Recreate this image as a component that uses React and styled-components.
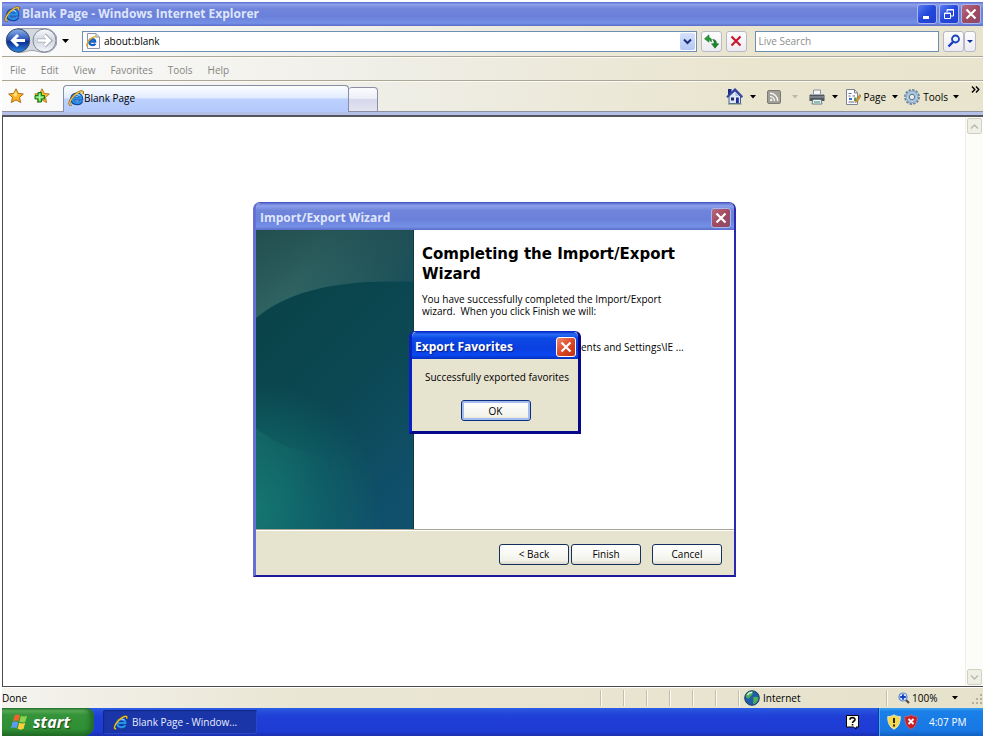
import React from 'react';
import styled, { createGlobalStyle, css } from 'styled-components';

const GlobalStyle = createGlobalStyle`
  *, *::before, *::after { box-sizing: border-box; }
  body {
    margin: 0;
    background: #fff;
    color: #000;
    font: 10px/12px "Open Sans", "Noto Sans", sans-serif;
  }
  button, input, select { font: inherit; color: inherit; margin: 0; }
  button { padding: 0; border: 0; background: none; }
  svg { display: block; flex: none; }
`;

const Desktop = styled.div`
  position: relative;
  display: flex;
  flex-direction: column;
  min-height: 100vh;
  padding: 2px 1px 2px 2px;
`;

/* ---------- title bars ---------- */

const TitleBar = styled.header`
  display: flex;
  align-items: center;
  flex: none;
  height: ${p => p.$h || 24}px;
  padding: ${p => p.$pad || '0 2px 0 2px'};
  color: ${p => (p.$active ? '#fff' : '#dfe6fb')};
  font-weight: bold;
  font-size: 12px;
  line-height: 16px;
  border-radius: ${p => (p.$round ? '5px 5px 0 0' : 0)};
  background: ${p =>
    p.$active
      ? 'linear-gradient(#0831c8 0, #2a6cf4 8%, #0d4be6 22%, #0a3fe0 60%, #0b48f0 85%, #0530c0 100%)'
      : 'linear-gradient(#5b6cd0 0, #8ca0ec 10%, #7085da 28%, #6a80da 60%, #7490e6 88%, #5a6cc8 100%)'};
  ${p => p.$active && css`text-shadow: 1px 1px 1px #041e88;`}
`;

const TitleText = styled.h1`
  flex: 1;
  min-width: 0;
  margin: 0;
  padding-left: ${p => (p.$icon ? 2 : 0)}px;
  overflow: hidden;
  white-space: nowrap;
  font: inherit;
`;

const tones = {
  blue: 'linear-gradient(135deg, #5b7df0, #2447dc 50%, #1f3fd0)',
  dim: 'linear-gradient(135deg, #b86a80, #a04a60 50%, #8c4a6a)',
  red: 'linear-gradient(135deg, #f08a70, #dc4828 50%, #c03010)',
};

const CaptionButton = styled.button`
  display: grid;
  place-items: center;
  width: 20px;
  height: 20px;
  margin-left: 2px;
  border: 1px solid ${p => (p.$tone === 'red' ? '#fff' : '#a9b6ee')};
  border-radius: 3px;
  background: ${p => tones[p.$tone]};
`;

/* ---------- navigation row ---------- */

const rowFill = 'linear-gradient(90deg, #fbfbfc, #efeee6 40%, #e9e5cf 75%, #e8e4cd)';

const NavRow = styled.div`
  display: flex;
  align-items: center;
  flex: none;
  height: 31px;
  padding: 0 7px 0 3px;
  border-bottom: 1px solid #aaa796;
  background: ${rowFill};
`;

const NavPair = styled.div`
  display: flex;
  align-items: center;
  height: 28px;
`;

const DropButton = styled.button`
  display: grid;
  place-items: center;
  width: ${p => p.$w || 14}px;
  height: 16px;
`;

const AddressBox = styled.label`
  display: flex;
  align-items: center;
  flex: 1;
  height: 21px;
  margin: 0 4px 0 8px;
  padding: 0 1px 0 2px;
  border: 1px solid #6d8fb5;
  background: #fff;
`;

const TextInput = styled.input`
  flex: 1;
  min-width: 0;
  height: 17px;
  padding: 0 3px;
  border: 0;
  outline: 0;
  background: transparent;
  &::placeholder { color: #8d8d8d; opacity: 1; }
`;

const SearchBox = styled(AddressBox)`
  flex: 0 0 19%;
  margin: 0 4px 0 8px;
  padding: 0;
`;

const ComboButton = styled.button`
  display: grid;
  place-items: center;
  width: 15px;
  height: 17px;
  border-radius: 2px;
  background: linear-gradient(#d5e0fc, #b4c8f6);
`;

const ToolButton = styled.button`
  display: grid;
  place-items: center;
  width: ${p => p.$w || 21}px;
  height: 21px;
  margin-right: ${p => p.$gap || 0}px;
  border: 1px solid #b7b9c6;
  border-radius: 3px;
  background: linear-gradient(#fdfdfd, #ecebf2);
`;

/* ---------- menu row ---------- */

const MenuRow = styled.nav`
  display: flex;
  align-items: center;
  flex: none;
  gap: 15px;
  height: 24px;
  padding: 1px 8px 0;
  border-top: 1px solid #fbfaf4;
  border-bottom: 1px solid #aaa796;
  color: #858580;
  background: ${rowFill};
`;

/* ---------- tab row ---------- */

const TabRow = styled.div`
  display: flex;
  align-items: flex-end;
  flex: none;
  height: 34px;
  padding: 0 1px 0 5px;
  border-bottom: 3px solid #b4c0e8;
  background: ${rowFill};
  box-shadow: inset 0 -1px #8d929d, inset 0 1px #fbfaf4;
`;

const IconButton = styled.button`
  align-self: center;
  display: grid;
  place-items: center;
  width: 18px;
  height: 18px;
  margin: 0 8px 2px 0;
`;

const Tab = styled.button`
  display: flex;
  align-items: center;
  flex: 0 1 286px;
  height: 27px;
  margin-left: 4px;
  padding: 0 0 2px 4px;
  border: 1px solid #858ea5;
  border-bottom: 0;
  border-radius: 4px 4px 0 0;
  background: linear-gradient(#fdfeff, #e2ecff 45%, #bdd1ff 50%, #b4c9fc);
`;

const NewTab = styled.button`
  width: 29px;
  height: 25px;
  border: 1px solid #8b8fa5;
  border-left: 0;
  border-radius: 3px 4px 0 0;
  background: linear-gradient(#fbfbff, #eeeef8 45%, #d6d8ec 50%, #e4e4f0);
`;

const Commands = styled.div`
  display: flex;
  align-items: center;
  align-self: center;
  margin-left: auto;
`;

const Command = styled.button`
  display: flex;
  align-items: center;
  gap: ${p => p.$space || 2}px;
  height: 18px;
  margin-left: ${p => p.$gap || 0}px;
`;

const More = styled.button`
  align-self: flex-start;
  width: 14px;
  margin: 1px 0 0 4px;
  height: 14px;
  display: grid;
  place-items: center;
`;

/* ---------- document ---------- */

const Viewport = styled.main`
  display: flex;
  flex: 1;
  justify-content: flex-end;
  border: 1px solid #4b4b4b;
  border-width: 2px 0 1px 1px;
  border-top-color: #55565c;
  background: #fff;
`;

const ScrollTrack = styled.div`
  display: flex;
  flex-direction: column;
  justify-content: space-between;
  align-items: center;
  width: 18px;
  padding: 1px;
  border-left: 1px solid #efeee8;
  background: #fcfcf9;
`;

const ScrollButton = styled.button`
  display: grid;
  place-items: center;
  width: 15px;
  height: 16px;
  border: 1px solid #d2d0c2;
  border-radius: 2px;
  background: #f0efe5;
`;

/* ---------- status bar ---------- */

const StatusBar = styled.footer`
  display: flex;
  align-items: center;
  flex: none;
  height: 21px;
  border-top: 1px solid #fff;
  background: linear-gradient(90deg, #f4f3ee, #e9e6d4 30%, #e6e2cb);
`;

const StatusText = styled.span`flex: 1;`;

const StatusCell = styled.span`
  display: flex;
  align-items: center;
  gap: ${p => p.$gap || 0}px;
  width: ${p => p.$w || 23}px;
  height: 16px;
  padding-left: ${p => p.$pad || 0}px;
  border-left: 1px solid #c2bfac;
  box-shadow: inset 1px 0 #faf9f2;
`;

/* ---------- taskbar ---------- */

const Taskbar = styled.div`
  display: flex;
  align-items: stretch;
  flex: none;
  height: 28px;
  color: #fff;
  background: linear-gradient(#2c5ee8 0, #2650dc 10%, #1f3fd6 30%, #1e3bd4 85%, #1a30ac 100%);
`;

const Start = styled.button`
  display: flex;
  align-items: center;
  gap: 4px;
  width: 92px;
  padding: 0 0 1px 9px;
  border-radius: 0 8px 10px 0;
  color: #fff;
  font: italic bold 16px/20px "Open Sans", sans-serif;
  text-shadow: 1px 1px 1px #1d4a1d;
  background: linear-gradient(#2f7a2f 0, #5cb05a 9%, #35933a 24%, #2f8f33 75%, #226b26 100%);
  box-shadow: inset -4px 0 5px #1f6b28;
`;

const TaskButton = styled.button`
  display: flex;
  align-items: center;
  gap: 4px;
  width: 154px;
  height: 24px;
  margin: 2px 0 0 9px;
  padding-left: 10px;
  border-radius: 2px;
  color: #e8eeff;
  background: #1a35a8;
  box-shadow: inset 1px 1px 1px #122880, inset -1px -1px 0 #2a48c4;
`;

const Help = styled.button`
  display: grid;
  place-items: center;
  width: 16px;
  margin: 0 17px 0 auto;
`;

const Tray = styled.div`
  display: flex;
  align-items: center;
  gap: 3px;
  width: 105px;
  padding-left: 8px;
  border-left: 1px solid #123a9c;
  background: linear-gradient(#3aa2f4 0, #1a80e8 12%, #1877e4 80%, #1260c0 100%);
  box-shadow: inset 1px 0 #44b0f8;
`;

const Clock = styled.time`margin-left: 8px;`;

/* ---------- dialogs ---------- */

const Wizard = styled.section`
  position: absolute;
  left: 253px;
  top: 202px;
  width: 483px;
  display: flex;
  flex-direction: column;
  border: 3px solid #5560cc;
  border-color: #4a54c0 #2a2ab0 #1b1a9c #6670d4;
  border-width: 1px 2px 2px 3px;
  border-radius: 7px 7px 0 0;
  background: #e6e3cf;
`;

const WizardBody = styled.div`
  display: flex;
  height: 300px;
  border-bottom: 1px solid #a8a594;
  background: #fff;
`;

const WizardCopy = styled.div`
  flex: 1;
  padding: 14px 8px 0;
`;

const Heading = styled.h2`
  margin: 0 0 9px;
  font: bold 15px/20px "DejaVu Sans", sans-serif;
`;

const Copy = styled.p`
  max-width: 260px;
  margin: 0 0 24px;
  white-space: pre-line;
`;

const PathLine = styled.p`
  margin: 0;
  padding-left: 159px;
  white-space: nowrap;
`;

const WizardButtons = styled.div`
  display: flex;
  justify-content: flex-end;
  align-items: center;
  gap: 2px;
  height: 45px;
  padding: 2px 12px 0 0;
  border-top: 1px solid #fff;
`;

const PushButton = styled.button`
  width: 70px;
  height: 21px;
  margin-left: ${p => p.$gap || 0}px;
  border: 1px solid #14305c;
  border-radius: 3px;
  background: linear-gradient(#fff, #f3f3ec 80%, #dcd8cc);
  ${p => p.$focus && css`
    border-color: #0c2c84;
    box-shadow: inset 0 0 0 2px #a3bdee;
  `}
`;

const Message = styled.section`
  position: absolute;
  left: 409px;
  top: 331px;
  width: 172px;
  border: 3px solid #0a1fc4;
  border-color: #0a2ad0 #06088c #06088c #0a1fc4;
  border-top-width: 1px;
  border-radius: 6px 6px 0 0;
  background: #e6e3cf;
`;

const MessageBody = styled.div`
  display: flex;
  flex-direction: column;
  gap: 17px;
  height: 72px;
  padding-top: 12px;
  padding-left: 13px;
  white-space: nowrap;
`;

const MessageActions = styled.div`
  display: flex;
  justify-content: center;
  padding-right: 12px;
`;

/* ---------- drawings ---------- */

const IeIcon = ({ size = 16 }) => (
  <svg width={size} height={size} viewBox="0 0 16 16" fill="none" aria-hidden="true">
    <path d="M13.600 10.800C11.300 15 4.300 14 4 8.800 4 3 13.600 2.600 13.400 8.600H5.500" stroke="#0b3f94" strokeWidth="3.600" />
    <path d="M13.300 10.600C11.200 14.500 4.500 13.500 4.300 8.800 4.300 3.500 13.200 3 13.200 8.500H5.500" stroke="#2a8fe8" strokeWidth="2.300" />
    <path d="M5.200 6C6.500 4 10.500 3.600 12 5.600" stroke="#9bdcff" strokeWidth="1.200" />
    <path d="M3.500 14.700C.600 15.600.500 11.500 5 6.600 8.600 2.600 13.300.200 14.700 1.600c.600.700.300 1.700-.100 2.500" stroke="#7a6018" strokeWidth="2" />
    <path d="M3.300 14.500C.900 15.100 1 11.400 5.100 6.800 8.700 2.800 13.200.700 14.400 1.800c.500.500.300 1.400 0 2" stroke="#f9c83a" strokeWidth="1.200" />
  </svg>
);

const PageIeIcon = () => (
  <svg width="16" height="16" viewBox="0 0 16 16" fill="none" aria-hidden="true">
    <path d="M2.500.500H11L14.500 4v11.500h-12z" fill="#fdfdfd" stroke="#8c94a8" />
    <path d="M11 .500V4h3.500" stroke="#8c94a8" />
    <path d="M10.300 10.600C8.900 13 4.300 12.500 4.200 9c0-3.600 6-4 6-.300H5" stroke="#1560c4" strokeWidth="2.200" />
    <path d="M2.800 13.300C1 13.500 1.400 10.300 4.500 7 7.500 3.900 11 2.800 11.500 4.200" stroke="#e5aa1d" strokeWidth="1.300" />
  </svg>
);

const Caret = ({ color = '#000' }) => (
  <svg width="6" height="4" viewBox="0 0 6 4" aria-hidden="true"><path d="M0 0h6L3 3.500z" fill={color} /></svg>
);

const Chevron = ({ up, color = '#1c2f78', width = 2 }) => (
  <svg width="9" height="7" viewBox="0 0 9 7" fill="none" aria-hidden="true">
    <path d={up ? 'M1 5.500 4.500 2 8 5.500' : 'M1 1.500 4.500 5 8 1.500'} stroke={color} strokeWidth={width} />
  </svg>
);

const Cross = ({ color = '#fff' }) => (
  <svg width="12" height="12" viewBox="0 0 12 12" aria-hidden="true">
    <path d="M1.500 1.500l9 9M10.500 1.500l-9 9" stroke={color} strokeWidth="2.200" />
  </svg>
);

const NavArrows = () => (
  <svg width="52" height="28" viewBox="0 0 52 28" fill="none" aria-hidden="true">
    <defs>
      <linearGradient id="backFill" x2="0" y2="1">
        <stop stopColor="#8fb2ea" /><stop offset=".45" stopColor="#2d58b8" /><stop offset=".55" stopColor="#0c2e94" /><stop offset="1" stopColor="#2b8ae4" />
      </linearGradient>
      <linearGradient id="forwardFill" x2="0" y2="1">
        <stop stopColor="#fafbfd" /><stop offset=".5" stopColor="#cfd6e0" /><stop offset="1" stopColor="#f4f7fa" />
      </linearGradient>
    </defs>
    <path d="M13 1.500h27a12 12 0 0 1 0 24c-6 0-8-2-13-2s-7 2-14 2z" fill="#d3d7de" stroke="#9aa0ab" />
    <circle cx="13" cy="13.500" r="11.700" fill="url(#backFill)" stroke="#3d4a6c" />
    <circle cx="39.500" cy="13.500" r="11.500" fill="url(#forwardFill)" stroke="#7f8796" />
    <path d="M20 13.500H8.500M13 8l-5.500 5.500L13 19" stroke="#fff" strokeWidth="3" />
    <path d="M32 13.500h12M39.500 8l5.500 5.500-5.500 5.500" stroke="#a3aab5" strokeWidth="4" />
    <path d="M32.500 13.500H44M39.500 8.500l5 5-5 5" stroke="#fff" strokeWidth="2.600" />
  </svg>
);

const RefreshIcon = () => (
  <svg width="15" height="15" viewBox="0 0 15 15" aria-hidden="true">
    <path d="M5 .800.500 4.800 5 8.200V6c1.300.200 2 .900 2.200 2C8.200 5.500 7 3.700 5 3.500z" fill="#2a9a38" stroke="#0d5a18" strokeWidth=".5" />
    <path d="M11 14.200l3.800-4.500h-2.300C12.800 7 11 5.300 8.500 5.600c1.300.700 1.700 2 1.500 4.100H7.500z" fill="#1c8a2a" stroke="#0d5a18" strokeWidth=".5" />
  </svg>
);

const SearchIcon = () => (
  <svg width="14" height="14" viewBox="0 0 14 14" fill="none" aria-hidden="true">
    <circle cx="8.500" cy="5" r="3.500" fill="#e8f2ff" stroke="#1b3fc0" strokeWidth="1.800" />
    <path d="M6 7.800 1.500 12.500" stroke="#1b3fc0" strokeWidth="2.400" />
  </svg>
);

const star = 'M8 .800 10.200 5.400 15.300 6 11.500 9.400 12.600 14.500 8 11.900 3.400 14.500 4.500 9.400.700 6 5.800 5.400z';

const StarIcon = () => (
  <svg width="16" height="16" viewBox="0 0 16 16" aria-hidden="true">
    <path d={star} fill="#fbb524" stroke="#b06a10" /><path d="M8 3 9.300 6.300 8 9 5 7z" fill="#ffe07a" />
  </svg>
);

const AddStarIcon = () => (
  <svg width="16" height="16" viewBox="0 0 16 16" aria-hidden="true">
    <path d={star} fill="#fbbd34" stroke="#b87a18" />
    <path d="M4 4.500h3.500V7.500H10.500V11H7.500v3H4v-3H1V7.500h3z" fill="#5bd04c" stroke="#16781c" />
    <path d="M5.700 6v6.500M2.500 9.200H9" stroke="#c8f7b8" />
  </svg>
);

const HomeIcon = () => (
  <svg width="17" height="17" viewBox="0 0 17 17" aria-hidden="true">
    <path d="M2 1h3.500v7H2z" fill="#1a2a90" />
    <path d="M3 8v7.500h11.500V8L9 3z" fill="#dfe6f6" stroke="#4a5c98" />
    <path d="M1 9.200 9 1.500 16.300 9.200" fill="none" stroke="#34489c" strokeWidth="2.200" />
    <path d="M9 3.500 13 8H9.500z" fill="#aebbe0" />
    <path d="M5 9.500h3v3H5z" fill="#1d2868" /><path d="M10 9.500h2.800V15H10z" fill="#1e2f94" />
    <path d="M2 16h13.500" stroke="#6b8a78" />
  </svg>
);

const FeedIcon = () => (
  <svg width="14" height="14" viewBox="0 0 14 14" fill="none" aria-hidden="true">
    <rect x=".500" y=".500" width="13" height="13" rx="1.500" fill="#a19f97" stroke="#7b7a73" />
    <path d="M3 6.500a4.500 4.500 0 0 1 4.500 4.500M3 3.300A7.700 7.700 0 0 1 10.700 11" stroke="#f4f3ec" strokeWidth="1.500" />
    <circle cx="4.200" cy="10" r="1.200" fill="#f4f3ec" />
  </svg>
);

const PrinterIcon = () => (
  <svg width="16" height="16" viewBox="0 0 16 16" aria-hidden="true">
    <path d="M4.500 1h7v5h-7z" fill="#f4f6f8" stroke="#8b939b" />
    <path d="M2 5h12l1.500 1.500V12H.500V6.500z" fill="#50565e" />
    <path d="M2 5.500h12M1 8h14" stroke="#a4abb4" />
    <path d="M4 10.500h8l1 4.500H3z" fill="#f4f8f6" stroke="#6f7a84" />
    <path d="M5 13h6" stroke="#5fb0a0" strokeWidth="1.500" />
  </svg>
);

const PageIcon = () => (
  <svg width="16" height="16" viewBox="0 0 16 16" aria-hidden="true">
    <path d="M1.500.500h8L12.500 4v11.500h-11z" fill="#fff" stroke="#7c8494" />
    <path d="M9.500.500V4h3" fill="none" stroke="#7c8494" />
    <path d="M3.500 4.500h3M3.500 7h2M7.500 7H10M3.500 13h6" stroke="#5f6b84" />
    <path d="M4 9h3v2H4z" fill="#3a6fc4" /><path d="M9 8.500h2.500V12H9z" fill="#58a04c" />
    <path d="M14.800 5.500 10.800 11.500l-.3 2 1.800-1L16 7z" fill="#e0a338" stroke="#8a6118" strokeWidth=".6" />
  </svg>
);

const GearIcon = () => (
  <svg width="16" height="16" viewBox="0 0 16 16" fill="none" aria-hidden="true">
    <circle cx="8" cy="8" r="6.900" stroke="#63809f" strokeWidth="2" strokeDasharray="2.400 1.210" />
    <circle cx="8" cy="8" r="4.800" stroke="#93afcb" strokeWidth="3.400" />
    <circle cx="8" cy="8" r="4.400" stroke="#bdd2e6" strokeWidth="1.400" />
    <circle cx="8" cy="8" r="2.700" fill="#f0eee0" stroke="#5379a4" />
  </svg>
);

const GlobeIcon = () => (
  <svg width="16" height="16" viewBox="0 0 16 16" aria-hidden="true">
    <circle cx="8" cy="8" r="7.300" fill="#1d5ca8" stroke="#173e68" />
    <path d="M2 5C4 1.500 8 .800 9.500 1.500 8 3 9.500 4 7.500 5.500S6 8 4.500 8.500 1.500 7 2 5zM9 7.500c2-1.500 5-.5 5.500.5-.5 3.500-3 6-5 6.200C8.500 12 10 10.500 9 7.500z" fill="#4fae58" />
    <path d="M3.500 5C4.500 3 6.500 2.300 8 2.500" stroke="#d6f6e0" strokeWidth="1.500" fill="none" />
  </svg>
);

const ZoomIcon = () => (
  <svg width="12" height="12" viewBox="0 0 12 12" fill="none" aria-hidden="true">
    <path d="M7.500 7.500l3.500 3.500" stroke="#5d4a3c" strokeWidth="2.200" />
    <circle cx="5" cy="5" r="4" fill="#d4e8ff" stroke="#5a86d4" strokeWidth="1.200" />
    <path d="M5 2.200v5.600M2.200 5h5.600" stroke="#173fb8" strokeWidth="1.800" />
  </svg>
);

const WindowsIcon = () => (
  <svg width="18" height="18" viewBox="0 0 18 18" aria-hidden="true">
    <path d="M3.700 2.300C5.500 1 7.500 1.200 9 2.200L7.500 8.200C5.700 7.200 3.800 7.100 1.900 8.200z" fill="#f2622c" />
    <path d="M9.900 2.800c1.900 1 3.900 1.100 6.100 0L14.400 8.700c-2 1.100-4.200 1.100-6 0z" fill="#8bd34a" />
    <path d="M1.500 9.300c2-1.200 4-1.100 5.700 0l-1.500 6c-1.900-1-3.800-1.100-5.700 0z" fill="#5b9cf4" />
    <path d="M8.100 9.800c1.900 1 4 1.100 6.100 0l-1.600 6c-2 1.100-4.100 1.100-6 0z" fill="#fbd03c" />
  </svg>
);

const Shield = ({ fill, edge, children }) => (
  <svg width="14" height="16" viewBox="0 0 14 16" aria-hidden="true">
    <path d="M7 .800c2 1.500 4 1.700 6.200 1.700C13.500 8.500 11.500 13 7 15.200 2.500 13 .500 8.500.800 2.500 3 2.500 5 2.300 7 .800z" fill={fill} stroke={edge} />
    {children}
  </svg>
);

const HelpIcon = () => (
  <svg width="14" height="15" viewBox="0 0 14 15" fill="none" aria-hidden="true">
    <path d="M.500.500h12v11.500h-2.500v2L7.500 12h-7z" fill="#fffff0" stroke="#000" />
    <path d="M4 4.700C4 2 9 2 9 4.600 9 6.300 6.500 6.200 6.500 8M6.500 9v1.500" stroke="#000" strokeWidth="1.600" />
  </svg>
);

const WizardArt = () => (
  <svg width="158" height="299" viewBox="0 0 158 299" aria-hidden="true">
    <defs>
      <linearGradient id="artTop" gradientUnits="userSpaceOnUse" x1="0" y1="0" x2="158" y2="80">
        <stop stopColor="#2b5d5c" /><stop offset=".35" stopColor="#306664" /><stop offset="1" stopColor="#174c58" />
      </linearGradient>
      <linearGradient id="artFade" gradientUnits="userSpaceOnUse" x1="0" y1="0" x2="20" y2="80">
        <stop stopColor="#1d4448" stopOpacity=".6" /><stop offset="1" stopColor="#1d4448" stopOpacity="0" />
      </linearGradient>
      <linearGradient id="artDark" x1=".1" x2=".75" y2="1">
        <stop stopColor="#0a4248" /><stop offset=".5" stopColor="#0b4852" /><stop offset="1" stopColor="#10506c" />
      </linearGradient>
      <radialGradient id="artGlow" gradientUnits="userSpaceOnUse" cx="-5" cy="280" r="130">
        <stop stopColor="#127a74" stopOpacity=".9" /><stop offset="1" stopColor="#127a74" stopOpacity="0" />
      </radialGradient>
      <linearGradient id="artEdge" x2="1" y2=".3">
        <stop stopColor="#1d7870" stopOpacity=".4" /><stop offset=".7" stopColor="#1d7870" stopOpacity="0" />
      </linearGradient>
    </defs>
    <path d="M0 0h158v299H0z" fill="url(#artTop)" />
    <path d="M0 0h158v90H0z" fill="url(#artFade)" />
    <path d="M0 88C32 62 78 49 158 52v247H0z" fill="url(#artDark)" />
    <path d="M0 150h158v149H0z" fill="url(#artGlow)" />
    <path d="M0 198c12 10 26 18 42 22 20 6 40 8 60 8v71H0z" fill="url(#artEdge)" />
    <path d="M157.500 0v299" stroke="#0c3848" />
  </svg>
);

const menus = ['File', 'Edit', 'View', 'Favorites', 'Tools', 'Help'];

export default function App() {
  return (
    <>
      <GlobalStyle />
      <Desktop>
        <TitleBar>
          <IeIcon />
          <TitleText $icon>Blank Page - Windows Internet Explorer</TitleText>
          <CaptionButton $tone="blue" aria-label="Minimize">
            <svg width="12" height="12" viewBox="0 0 12 12"><path d="M2 9.500h6" stroke="#fff" strokeWidth="3" /></svg>
          </CaptionButton>
          <CaptionButton $tone="blue" aria-label="Restore">
            <svg width="12" height="12" viewBox="0 0 12 12" fill="none" stroke="#fff">
              <path d="M4 4V1.500h6.500V8H8M4 2h7M1.500 5h6v5.500h-6zM1 5.500h7" />
            </svg>
          </CaptionButton>
          <CaptionButton $tone="dim" aria-label="Close"><Cross /></CaptionButton>
        </TitleBar>

        <NavRow>
          <NavPair><NavArrows /></NavPair>
          <DropButton $w={17} aria-label="Recent pages">
            <svg width="7" height="4" viewBox="0 0 7 4"><path d="M0 0h7L3.500 4z" /></svg>
          </DropButton>
          <AddressBox>
            <PageIeIcon />
            <TextInput aria-label="Address" defaultValue="about:blank" />
            <ComboButton aria-label="Show addresses"><Chevron /></ComboButton>
          </AddressBox>
          <ToolButton $gap={4} aria-label="Refresh"><RefreshIcon /></ToolButton>
          <ToolButton aria-label="Stop"><Cross color="#c8182c" /></ToolButton>
          <SearchBox><TextInput aria-label="Live Search" placeholder="Live Search" /></SearchBox>
          <ToolButton aria-label="Search"><SearchIcon /></ToolButton>
          <ToolButton $w={12} aria-label="Search options">
            <svg width="6" height="3" viewBox="0 0 6 3"><path d="M0 0h6L3 3z" fill="#10309c" /></svg>
          </ToolButton>
        </NavRow>

        <MenuRow>
          {menus.map(name => <button key={name}>{name}</button>)}
        </MenuRow>

        <TabRow>
          <IconButton aria-label="Favorites Center"><StarIcon /></IconButton>
          <IconButton aria-label="Add to Favorites"><AddStarIcon /></IconButton>
          <Tab><IeIcon />Blank Page</Tab>
          <NewTab aria-label="New tab" />
          <Commands>
            <Command aria-label="Home"><HomeIcon /></Command>
            <DropButton $w={20} aria-label="Home options"><Caret /></DropButton>
            <Command $gap={4} aria-label="Feeds"><FeedIcon /></Command>
            <DropButton $w={28} aria-label="Feed options"><Caret color="#b9b7aa" /></DropButton>
            <Command aria-label="Print"><PrinterIcon /></Command>
            <DropButton $w={20} aria-label="Print options"><Caret /></DropButton>
            <Command $space={3}><PageIcon />Page</Command>
            <DropButton $w={18} aria-label="Page options"><Caret /></DropButton>
            <Command $space={3}><GearIcon />Tools</Command>
            <DropButton $w={16} aria-label="Tools options"><Caret /></DropButton>
          </Commands>
          <More aria-label="More commands">
            <svg width="9" height="7" viewBox="0 0 9 7" fill="none">
              <path d="M1 .500 3.800 3.500 1 6.500M5 .500l2.800 3L5 6.500" stroke="#000" strokeWidth="1.400" />
            </svg>
          </More>
        </TabRow>

        <Viewport>
          <ScrollTrack>
            <ScrollButton aria-label="Scroll up"><Chevron up color="#b9b8ac" width={1.5} /></ScrollButton>
            <ScrollButton aria-label="Scroll down"><Chevron color="#b9b8ac" width={1.5} /></ScrollButton>
          </ScrollTrack>
        </Viewport>

        <StatusBar>
          <StatusText>Done</StatusText>
          <StatusCell /><StatusCell /><StatusCell /><StatusCell /><StatusCell /><StatusCell />
          <StatusCell $w={148} $pad={5} $gap={3}><GlobeIcon />Internet</StatusCell>
          <StatusCell $w={97} $pad={11} $gap={2}>
            <ZoomIcon />100%
            <DropButton $w={34} aria-label="Zoom level"><Caret /></DropButton>
            <svg width="11" height="11" viewBox="0 0 11 11">
              <path d="M8 1h2v2H8zM8 5h2v2H8zM4 5h2v2H4zM8 9h2v2H8zM4 9h2v2H4zM0 9h2v2H0z" fill="#b3af9a" />
            </svg>
          </StatusCell>
        </StatusBar>

        <Taskbar>
          <Start><WindowsIcon />start</Start>
          <TaskButton><IeIcon size={15} />Blank Page - Window...</TaskButton>
          <Help aria-label="Help"><HelpIcon /></Help>
          <Tray>
            <Shield fill="#f5d84c" edge="#e8e4c0"><path d="M7 4v5M7 10.500v2" stroke="#2c2608" strokeWidth="2" /></Shield>
            <Shield fill="#cc1c24" edge="#a86a80"><path d="M4.500 5l5 5M9.500 5l-5 5" stroke="#fff" strokeWidth="1.800" /></Shield>
            <Clock>4:07 PM</Clock>
          </Tray>
        </Taskbar>

        <Wizard role="dialog" aria-label="Import/Export Wizard">
          <TitleBar $round $h={27} $pad="2px 3px 0 4px">
            <TitleText>Import/Export Wizard</TitleText>
            <CaptionButton $tone="dim" aria-label="Close wizard"><Cross /></CaptionButton>
          </TitleBar>
          <WizardBody>
            <WizardArt />
            <WizardCopy>
              <Heading>Completing the Import/Export Wizard</Heading>
              <Copy>{'You have successfully completed the Import/Export\nwizard.\u00a0 When you click Finish we will:'}</Copy>
              <PathLine>ents and Settings\IE ...</PathLine>
            </WizardCopy>
          </WizardBody>
          <WizardButtons>
            <PushButton>&lt; Back</PushButton>
            <PushButton>Finish</PushButton>
            <PushButton $gap={9}>Cancel</PushButton>
          </WizardButtons>
        </Wizard>

        <Message role="dialog" aria-label="Export Favorites">
          <TitleBar $active $round $h={27} $pad="2px 2px 0 3px">
            <TitleText>Export Favorites</TitleText>
            <CaptionButton $tone="red" aria-label="Close message"><Cross /></CaptionButton>
          </TitleBar>
          <MessageBody>
            <span>Successfully exported favorites</span>
            <MessageActions><PushButton $focus>OK</PushButton></MessageActions>
          </MessageBody>
        </Message>
      </Desktop>
    </>
  );
}
